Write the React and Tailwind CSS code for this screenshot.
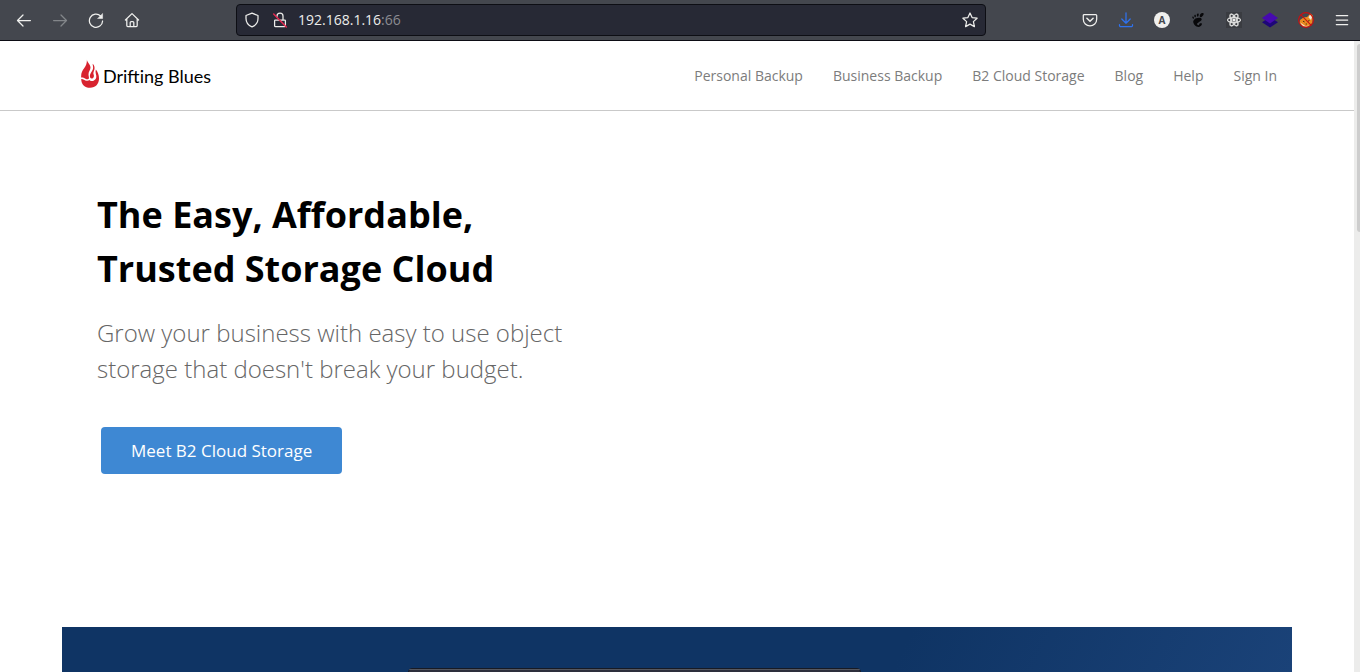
import React from "react";
import { SiGnome, SiReact } from "react-icons/si";

const navLinks = ["Personal Backup", "Business Backup", "B2 Cloud Storage", "Blog", "Help", "Sign In"];

function Icon({ children, className = "" }) {
  return (
    <svg
      viewBox="0 0 16 16"
      className={`size-4 shrink-0 ${className}`}
      fill="none"
      stroke="currentColor"
      strokeWidth="1.25"
      strokeLinecap="round"
      strokeLinejoin="round"
      aria-hidden="true"
    >
      {children}
    </svg>
  );
}

function ToolButton({ label, children, className = "text-[#f0f0ee]" }) {
  return (
    <button type="button" aria-label={label} className={`flex h-8 w-9 items-center justify-center ${className}`}>
      {children}
    </button>
  );
}

function Toolbar() {
  return (
    <div className="flex h-[41px] shrink-0 items-center border-b border-[#0c0c14] bg-[#44474e]">
      <div className="flex pl-1.5">
        <ToolButton label="Back">
          <Icon><path d="M14.4 8.5H1.6M7 3 1.5 8.5 7 14" /></Icon>
        </ToolButton>
        <ToolButton label="Forward" className="text-[#83868a]">
          <Icon><path d="M1.6 8.5h12.8M9 3l5.5 5.5L9 14" /></Icon>
        </ToolButton>
        <ToolButton label="Reload">
          <Icon>
            <path d="M12.6 4A6.6 6.6 0 1 0 14.6 9" />
            <path d="M14.6 1.8v4.7H9.9z" fill="currentColor" strokeWidth="0.5" />
          </Icon>
        </ToolButton>
        <ToolButton label="Home">
          <Icon>
            <path d="M1.4 8 8 1.6 14.6 8M2.8 7v6.6a1 1 0 0 0 1 1h8.4a1 1 0 0 0 1-1V7M6.2 14.5v-4a1 1 0 0 1 1-1h1.6a1 1 0 0 1 1 1v4" />
          </Icon>
        </ToolButton>
      </div>

      <div className="mx-[86px] flex h-8 min-w-0 flex-1 items-center rounded border border-[#0d0e14] bg-[#272935] px-[7px] text-[#ededeb]">
        <Icon>
          <path d="M8 1.2 14 3.5v3c0 4-2.5 7-6 8.4C4.500 13.500 2 10.500 2 6.500v-3z" />
        </Icon>
        <Icon className="ml-3">
          <path d="M5 4.800V4a3 3 0 0 1 6 0v4M3.300 8h9.400a.7.7 0 0 1 .7.7v5a1 1 0 0 1-1 1H3.600a1 1 0 0 1-1-1v-5a.7.7 0 0 1 .7-.7z" />
          <path d="M1.700 2 14.300 15" stroke="#e22850" strokeWidth="1.500" />
        </Icon>
        <div className="ml-[10px] min-w-0 flex-1 text-sm leading-5">
          192.168.1.16<span className="text-[#8b8c92]">:66</span>
        </div>
        <button type="button" aria-label="Bookmark this page">
          <Icon>
            <path d="m8 1 2.100 4.600 5 .6-3.700 3.400 1 5L8 12.100l-4.400 2.500 1-5L.9 6.200l5-.6z" />
          </Icon>
        </button>
      </div>

      <div className="flex">
        <ToolButton label="Save to Pocket">
          <Icon>
            <path d="M2.300 2.500h11.400a1 1 0 0 1 1 1v3.700a6.700 6.700 0 0 1-13.400 0V3.500a1 1 0 0 1 1-1z" />
            <path d="M4.900 6.200 8 9.200l3.100-3" strokeWidth="1.500" />
          </Icon>
        </ToolButton>
        <ToolButton label="Downloads" className="text-[#2f72ee]">
          <Icon>
            <path d="M8 .8v10M3.800 7 8 11.200 12.200 7M1.500 12.500v1a1.200 1.200 0 0 0 1.200 1.200h10.600a1.200 1.200 0 0 0 1.200-1.200v-1" />
          </Icon>
        </ToolButton>
        <ToolButton label="Account">
          <span className="flex size-4 items-center justify-center rounded-full bg-[#f0f0ee] text-[10px] font-bold text-[#44474e]">
            A
          </span>
        </ToolButton>
        <ToolButton label="GNOME Shell integration" className="text-[#08080a]">
          <SiGnome className="size-[14px]" />
        </ToolButton>
        <ToolButton label="React developer tools">
          <span className="flex size-4 items-center justify-center bg-[#3a3c41]">
            <SiReact className="size-[14px]" stroke="currentColor" strokeWidth="1" />
          </span>
        </ToolButton>
        <ToolButton label="Layers extension">
          <svg viewBox="0 0 16 16" className="size-4" aria-hidden="true">
            <path d="M0 10.200 8 5l8 5.200-8 5.400z" fill="#1e0678" />
            <path d="M0 6 8 .4 16 6l-8 5.600z" fill="#470ab0" />
          </svg>
        </ToolButton>
        <ToolButton label="Fox extension">
          <svg viewBox="0 0 16 16" className="size-4" aria-hidden="true">
            <path d="M2 8 5.500 5.500 9 5l3.500-3.500 2.300 2-.3 7-3.500 4-6 .3-3.500-4z" fill="#ea8b20" />
            <path d="M12 2.500 14 5l-1 3-2.500-2.500z" fill="#f3eadb" />
            <path d="M2 10.500 4.500 12l3.500 2.500 3-1.500-2 2-4-.5z" fill="#f6e1c2" />
            <path d="M5 9.200l1.600.8M10 9.200l1.500-.8M7.700 12h1.200" stroke="#4a2b12" strokeWidth="1" />
            <circle cx="8" cy="8" r="7.400" fill="none" stroke="#c90f12" strokeWidth="1.100" />
            <path d="m2.700 2.700 10.600 10.600" stroke="#c90f12" strokeWidth="1.100" />
          </svg>
        </ToolButton>
        <ToolButton label="Open menu">
          <Icon><path d="M2.300 3.500h11.400M2.300 8h11.400M2.300 12.500h11.400" /></Icon>
        </ToolButton>
      </div>
    </div>
  );
}

function Flame() {
  return (
    <svg viewBox="0 0 18 29" className="h-[29px] w-[18px]" fill="#d8232f" aria-hidden="true">
      <path d="M5.800 0C5.800 3.200 9.500 5 9.500 8.600c0 2.500-2 4-2 6.600 0 1.800.6 3 .4 4-.3 1.200-1.900 1.300-3.400.5C3 19 1.400 18.300.2 18.600-.2 14.500 1.200 11.500 3.300 9 5.300 6.500 6.200 3.500 5.800 0z" />
      <path d="M11.700 4.800c1.700 1.800 2.200 3.700 1.700 5.700-.6 2.200-1.500 3.300-.7 5.300.5 1.300.3 3-1.300 3.600-1.700.6-2.600-.8-2.500-2.700.1-2.900 3.300-5 3.200-8.300 0-1.300-.5-2.300-.4-3.600z" />
      <path d="M14.900 10.500c2 2.400 3.100 5.700 3.100 9 0 5.400-3.400 9.300-8.900 9.300C3.700 28.800.3 25.500.2 20c1.800-.3 3.300 1.600 5.600 1.800 1.100.1 2-.2 2.700-.8.600 1 2 1.400 3.600.9 2.400-.7 3.500-2.600 3.200-5.100-.2-1.900-1.300-3.700-.4-6.300z" />
    </svg>
  );
}

function SiteHeader() {
  return (
    <header className="border-b border-[#c9c9c9]">
      <div className="mx-auto flex h-[69px] max-w-[1200px] items-center justify-between">
        <a href="#home" className="flex items-center gap-1 pl-1 text-black">
          <span className="pb-1"><Flame /></span>
          <span className="font-['Lato',sans-serif] text-lg leading-6">Drifting Blues</span>
        </a>
        <nav aria-label="Main" className="flex gap-[30px] text-sm text-[#7c7c7c]">
          {navLinks.map((label) => (
            <a key={label} href="#top">{label}</a>
          ))}
        </nav>
      </div>
    </header>
  );
}

function Hero() {
  return (
    <section className="mx-auto w-full max-w-[1200px] px-5 pt-[77px] pb-[153px]">
      <h1 className="text-4xl leading-[54px] font-bold text-black">
        The Easy, Affordable,
        <br />
        Trusted Storage Cloud
      </h1>
      <p className="mt-[19px] text-2xl leading-9 font-light text-[#666]">
        Grow your business with easy to use object
        <br />
        storage that doesn't break your budget.
      </p>
      <a
        href="#b2"
        className="mt-10 ml-1 inline-flex h-[47px] items-center rounded bg-[#3e88d3] px-[30px] text-[17px] text-white"
      >
        Meet B2 Cloud Storage
      </a>
    </section>
  );
}

function Banner() {
  return (
    <section
      aria-label="Product preview"
      className="mx-auto flex min-h-0 w-full max-w-[1230px] flex-1 justify-center bg-linear-[115deg] from-[#0f3464] from-68% to-[#1a4278] pt-[41px] pr-[85px]"
    >
      <div className="h-80 w-[453px] rounded-t border border-[#171a24] bg-[#2d2f3c]">
        <div className="h-px rounded-t bg-[#55575f]" />
      </div>
    </section>
  );
}

export default function App() {
  return (
    <div className="flex h-screen flex-col overflow-hidden bg-white font-['Open_Sans',sans-serif]">
      <Toolbar />
      <div className="flex min-h-0 flex-1">
        <main className="flex min-w-0 flex-1 flex-col overflow-hidden">
          <SiteHeader />
          <Hero />
          <Banner />
        </main>
        <div className="w-1.5 bg-[#ececeb] pt-[3px] pl-[3px]">
          <div className="h-[188px] rounded-l-sm bg-[#cdcdcd]" />
        </div>
      </div>
    </div>
  );
}
